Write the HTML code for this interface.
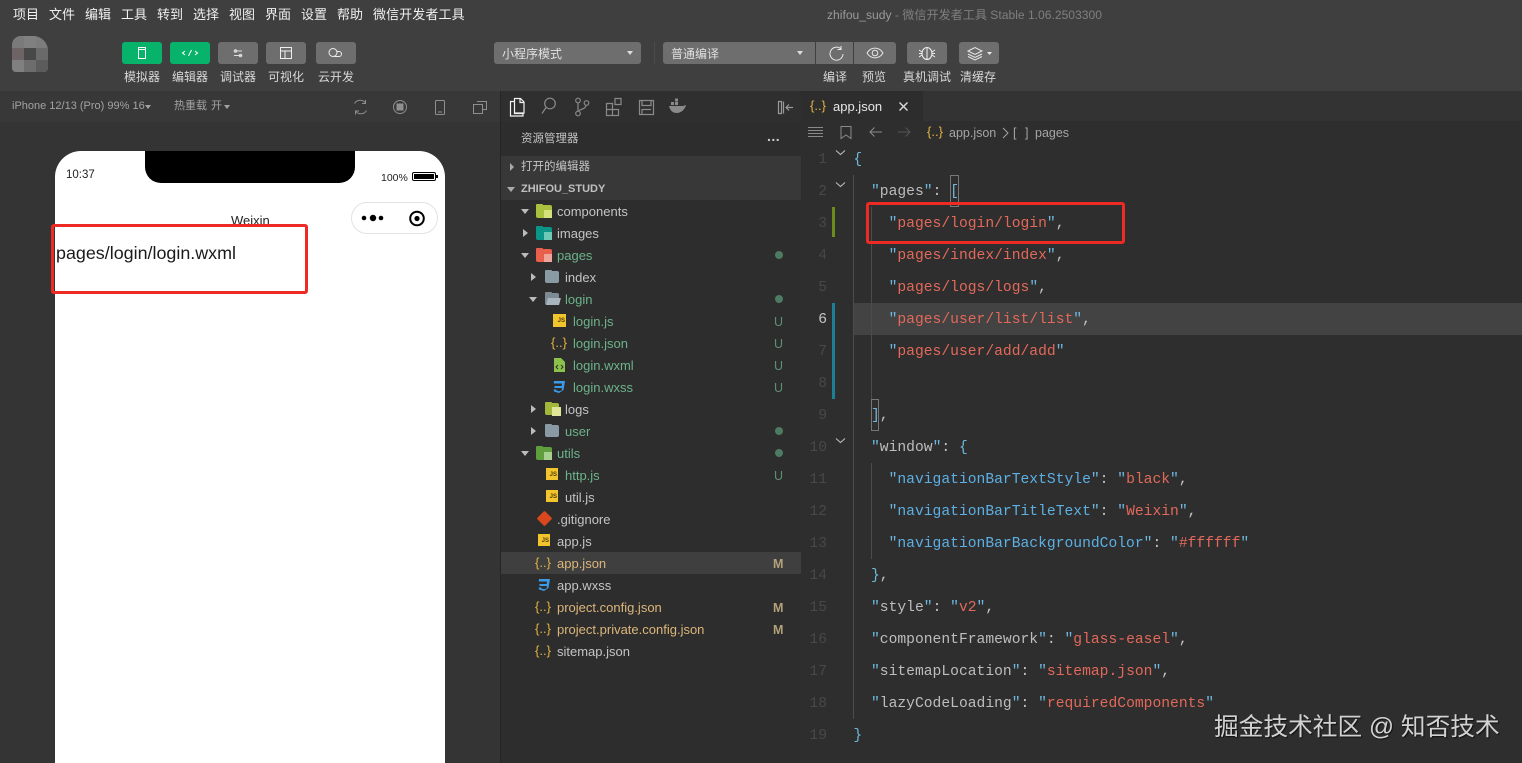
<!DOCTYPE html>
<html><head><meta charset="utf-8">
<style>
*{box-sizing:border-box}
html,body{margin:0;padding:0;width:1522px;height:763px;overflow:hidden;background:#2f2f2f}
body{position:relative;font-family:"Liberation Sans","Noto Sans CJK SC",sans-serif;color:#ccc}
.a{position:absolute;white-space:nowrap}
.m{font-size:13px;color:#f0f0f0;top:7px;line-height:16px}
.btn{position:absolute;top:42px;width:40px;height:22px;background:#6e6e6e;border-radius:3px}
.btn.g{background:#07b26a}
.btn svg,.dd svg{position:absolute;left:0;top:0}
.l{position:absolute;top:69px;font-size:12px;line-height:17px;color:#d8d8d8;white-space:nowrap;text-align:center}
.dd{position:absolute;top:42px;height:22px;background:#6e6e6e;border-radius:3px;font-size:12px;line-height:25px;color:#e0e0e0;padding-left:8px}
.r{position:absolute;left:0;width:300px;height:22px;line-height:22px;font-size:13px;white-space:nowrap}
.t{position:absolute;top:1px;color:#c4c4c4}
.gr{color:#6cb38a!important}
.or{color:#dcb67a!important}
.st{position:absolute;left:273px;top:1px;font-size:12.5px;font-weight:400}
.u{color:#5e8f75}
.mm{color:#b3a17a;font-weight:700;left:272px}
.dot{position:absolute;left:274px;top:7px;width:8px;height:8px;border-radius:50%;background:#4f7a62}
.ar{position:absolute;width:0;height:0}
.ar.d{border-left:4px solid transparent;border-right:4px solid transparent;border-top:5px solid #bbb;top:9px}
.ar.rt{border-top:4px solid transparent;border-bottom:4px solid transparent;border-left:5px solid #bbb;top:7px}
.js{position:absolute;top:4px;width:12px;height:12px;background:#f3c52c;color:#4b3d10;font-size:6px;line-height:15px;font-weight:700;text-align:right;padding-right:1px}
.jn{position:absolute;top:0;color:#e3b341;font-size:13px;font-family:"Liberation Sans",sans-serif}
.fd{position:absolute;top:5px;width:16px;height:13px;border-radius:1px 2px 2px 2px}
.fd:before{content:"";position:absolute;left:0;top:-1px;width:7px;height:3px;background:inherit;border-radius:1px}
.c{position:absolute;left:853.4px;font-family:"Liberation Mono","DejaVu Sans Mono",monospace;font-size:14.67px;line-height:34px;height:32px;white-space:pre;color:#bdbdbd}
.q{color:#6fb7dc}.s{color:#e2695a}.k{color:#5cb0e3}.p{color:#c4c4c4}
.n{position:absolute;left:800px;width:27px;height:32px;text-align:right;font-family:"Liberation Mono",monospace;font-size:14.67px;line-height:34px;color:#484848}
</style></head><body>

<!-- top chrome -->
<div class="a" style="left:0;top:0;width:1522px;height:91px;background:#3f3f3f"></div>
<div class="a m" style="left:13px">项目</div>
<div class="a m" style="left:49px">文件</div>
<div class="a m" style="left:85px">编辑</div>
<div class="a m" style="left:121px">工具</div>
<div class="a m" style="left:157px">转到</div>
<div class="a m" style="left:193px">选择</div>
<div class="a m" style="left:229px">视图</div>
<div class="a m" style="left:265px">界面</div>
<div class="a m" style="left:301px">设置</div>
<div class="a m" style="left:337px">帮助</div>
<div class="a m" style="left:373px;letter-spacing:.1px">微信开发者工具</div>
<div class="a" style="left:827px;top:7px;font-size:12.1px;line-height:16px;color:#9a9a9a">zhifou_sudy <span style="color:#7f7f7f">- 微信开发者工具 Stable 1.06.2503300</span></div>

<!-- avatar -->
<div class="a" style="left:12px;top:36px;width:36px;height:36px;border-radius:9px 15px 4px 4px;overflow:hidden;background:#777">
<div class="a" style="left:0;top:0;width:12px;height:12px;background:#7a7a7a"></div>
<div class="a" style="left:12px;top:0;width:12px;height:12px;background:#808080"></div>
<div class="a" style="left:24px;top:0;width:12px;height:12px;background:#7c7c7c"></div>
<div class="a" style="left:0;top:12px;width:12px;height:12px;background:#6e6465"></div>
<div class="a" style="left:12px;top:12px;width:12px;height:12px;background:#484848"></div>
<div class="a" style="left:24px;top:12px;width:12px;height:12px;background:#6a6a6a"></div>
<div class="a" style="left:0;top:24px;width:12px;height:12px;background:#808080"></div>
<div class="a" style="left:12px;top:24px;width:12px;height:12px;background:#6d6d6d"></div>
<div class="a" style="left:24px;top:24px;width:12px;height:12px;background:#5c5c5c"></div>
</div>

<!-- left buttons -->
<div class="btn g" style="left:122px"><svg width="40" height="22" fill="none" stroke="#fff" stroke-width="1"><rect x="16.5" y="5.5" width="7" height="11"/><path d="M17 7.5h6"/></svg></div>
<div class="btn g" style="left:170px"><svg width="40" height="22" fill="none" stroke="#fff" stroke-width="1"><path d="M15 9l-2.500 2 2.500 2M25 9l2.500 2-2.500 2M21.500 8l-3 6"/></svg></div>
<div class="btn" style="left:218px"><svg width="40" height="22" fill="none" stroke="#ddd" stroke-width="1"><path d="M16 9h8M16 13.500h8"/><circle cx="17.500" cy="9" r="1.300"/><circle cx="22.500" cy="13.500" r="1.300"/></svg></div>
<div class="btn" style="left:266px"><svg width="40" height="22" fill="none" stroke="#eee" stroke-width="1"><rect x="14.500" y="5.500" width="11" height="11"/><path d="M14.500 9h11M19 9v7.500"/></svg></div>
<div class="btn" style="left:316px"><svg width="40" height="22" fill="none" stroke="#eee" stroke-width="1"><circle cx="17" cy="10.500" r="4"/><path d="M18 14.500h5a2.500 2.500 0 0 0 0-5h-2"/></svg></div>
<div class="l" style="left:124px">模拟器</div>
<div class="l" style="left:172px">编辑器</div>
<div class="l" style="left:220px">调试器</div>
<div class="l" style="left:268px">可视化</div>
<div class="l" style="left:318px">云开发</div>

<!-- center -->
<div class="dd" style="left:494px;width:147px">小程序模式<div class="ar d" style="left:133px;top:9px;border-width:4px 3px 0;border-top-color:#ddd"></div></div>
<div class="a" style="left:654px;top:42px;width:1px;height:22px;background:#4b4b4b"></div>
<div class="dd" style="left:663px;padding-left:8px;border-radius:3px 0 0 3px;width:152px">普通编译<div class="ar d" style="left:134px;top:9px;border-width:4px 3px 0;border-top-color:#ddd"></div></div>
<div class="dd" style="left:816px;width:37px;padding:0;border-radius:0"><svg width="37" height="22" fill="none" stroke="#e8e8e8" stroke-width="1"><path d="M25 7a6.500 6.500 0 1 0 2 5"/><path d="M25 4v3.500h-3.500"/></svg></div>
<div class="dd" style="left:854px;width:42px;padding:0;border-radius:0 3px 3px 0"><svg width="42" height="22" fill="none" stroke="#e8e8e8" stroke-width="1"><path d="M13 11c4-6.500 12-6.500 16 0-4 6.500-12 6.500-16 0z"/><circle cx="21" cy="11" r="2.800"/></svg></div>
<div class="dd" style="left:907px;width:40px;padding:0"><svg width="40" height="22" fill="none" stroke="#f0f0f0" stroke-width="1"><ellipse cx="20" cy="11.500" rx="5" ry="6"/><path d="M20 5.500v12M12 8l3 2M12 15l3-2M28 8l-3 2M28 15l-3-2M12 11.500h3M28 11.500h-3"/></svg></div>
<div class="dd" style="left:959px;width:40px;padding:0"><svg width="40" height="22" fill="none" stroke="#e8e8e8" stroke-width="1"><path d="M9 9l7-3.500 7 3.500-7 3.500zM9 12l7 3.500 7-3.500M9 14.500l7 3.500 7-3.500"/><path d="M28 10h5l-2.500 3z" fill="#e8e8e8" stroke="none"/></svg></div>
<div class="l" style="left:823px">编译</div>
<div class="l" style="left:862px">预览</div>
<div class="l" style="left:903px">真机调试</div>
<div class="l" style="left:960px">清缓存</div>

<!-- sub toolbar left -->
<div class="a" style="left:0;top:91px;width:501px;height:31px;background:#383838"></div>
<div class="a" style="left:0;top:122px;width:501px;height:641px;background:#343434"></div>
<div class="a" style="left:12px;top:98px;font-size:11px;line-height:17px;color:#a3a3a3">iPhone 12/13 (Pro) 99% 16</div>
<div class="ar d" style="left:145px;top:105px;border-width:4px 3px 0;border-top-color:#a3a3a3"></div>
<div class="a" style="left:174px;top:98px;font-size:11px;line-height:17px;color:#a3a3a3;word-spacing:1px">热重载 开</div>
<div class="ar d" style="left:224px;top:105px;border-width:4px 3px 0;border-top-color:#a3a3a3"></div>
<svg class="a" style="left:350px;top:96px" width="140" height="22" fill="none" stroke="#8f8f8f" stroke-width="1"><path d="M4.500 7.500a6.500 6.500 0 0 1 11-.5M16.500 14.500a6.500 6.500 0 0 1-11 .5"/><path d="M15.500 4v3.500h-3.500M5.500 18.500v-3.500h3.500"/><circle cx="50" cy="11" r="6.500"/><rect x="47" y="8" width="6" height="6" fill="#8f8f8f"/><rect x="85.500" y="4.500" width="9" height="14" rx="1"/><path d="M88 16h4"/><rect x="123.500" y="8.500" width="9" height="9"/><path d="M127 5.500h9.500v8h-4"/></svg>

<!-- phone -->
<div class="a" style="left:55px;top:151px;width:390px;height:640px;background:#fff;border-radius:26px 26px 0 0"></div>
<div class="a" style="left:145px;top:151px;width:210px;height:32px;background:#000;border-radius:0 0 16px 16px"></div>
<div class="a" style="left:66px;top:168px;font-size:11.500px;line-height:14px;color:#222">10:37</div>
<div class="a" style="left:381px;top:171px;font-size:10.500px;line-height:14px;color:#222">100%</div>
<div class="a" style="left:412px;top:172px;width:24px;height:9px;border:1px solid #000;border-radius:2px;padding:1px"><div style="width:100%;height:100%;background:#000"></div></div>
<div class="a" style="left:436px;top:175px;width:1.500px;height:3px;background:#000"></div>
<div class="a" style="left:231px;top:213px;font-size:13px;line-height:16px;color:#222">Weixin</div>
<div class="a" style="left:351px;top:202px;width:87px;height:32px;border:1px solid #e2e2e2;border-radius:16px;background:#fff"></div>
<svg class="a" style="left:360px;top:208px" width="70" height="20"><circle cx="4" cy="10" r="2.300"/><circle cx="13" cy="10" r="3.200"/><circle cx="21" cy="10" r="2.300"/><circle cx="57" cy="10.500" r="6.800" fill="none" stroke="#000" stroke-width="2"/><circle cx="57" cy="10.500" r="2.600"/></svg>
<div class="a" style="left:56px;top:243px;font-size:17.900px;line-height:20px;color:#1a1a1a">pages/login/login.wxml</div>
<div class="a" style="left:51px;top:224px;width:257px;height:70px;border:3px solid #ee2a24;border-radius:3px"></div>

<!-- explorer -->
<div class="a" style="left:501px;top:91px;width:300px;height:672px;background:#2d2d2d"></div>
<div class="a" style="left:500px;top:91px;width:1px;height:672px;background:#252525"></div>
<div class="a" style="left:501px;top:91px;width:300px;height:31px;background:#2f2f2f"></div>
<svg class="a" style="left:501px;top:92px" width="300" height="30" fill="none" stroke="#8a8a8a" stroke-width="1.200"><path stroke="#f2f2f2" d="M9.500 9.500h4v12h8.500v2.500h-12.500zM13.500 6.500h6l3.500 3.500v11h-9.500zM19 6.500v4h4"/><circle cx="49" cy="11.500" r="5.300"/><path d="M45 15.500l-4 6"/><circle cx="77" cy="8.500" r="2.300"/><circle cx="77" cy="21.500" r="2.300"/><circle cx="85.500" cy="11" r="2.300"/><path d="M77 11v8M85 13.500c-.5 3-4 3.500-7 5"/><path d="M105.500 11.500h6v6h-6zM111.500 17.500h6v6h-6zM105.500 17.500h6v6h-6zM114 6.500h6v6h-6z"/><path d="M138.500 8.500h14v14h-14zM141 8.500v5h9v-5M141 22.500v-5h9"/><path fill="#8a8a8a" stroke="none" d="M168 14h14c1 0 2-1 3-1-.5 3-4 8-9 8-5 0-7-3-8-7zM170 10h3v3h-3zM174 10h3v3h-3zM174 6.500h3v3h-3z"/><path d="M277.500 9.500h3v12h-3zM282.500 9.500v12M292 15.500h-7M288 12.500l-3 3 3 3" stroke="#9a9a9a"/></svg>
<div class="a" style="left:521px;top:131px;font-size:11.500px;line-height:17px;color:#c4c4c4">资源管理器</div>
<div class="a" style="left:767px;top:128px;font-size:14px;line-height:16px;font-weight:700;color:#ccc;letter-spacing:.5px">...</div>

<div class="a" style="left:501px;top:156px;width:300px;height:44px;background:#383838"></div>
<div class="ar rt" style="left:510px;top:163px;border-width:4px 0 4px 4px;border-left-color:#aaa"></div>
<div class="a" style="left:521px;top:159px;font-size:11.500px;line-height:17px;font-weight:400;color:#c4c4c4">打开的编辑器</div>
<div class="ar d" style="left:507px;top:187px;border-top-color:#aaa"></div>
<div class="a" style="left:521px;top:181px;font-size:11px;line-height:17px;font-weight:700;color:#c0c0c0">ZHIFOU_STUDY</div>

<div class="a" style="left:501px;top:200px;width:300px;height:474px">
<div class="r" style="top:0"><div class="ar d" style="left:20px"></div><div class="fd" style="left:35px;background:#a9c13f"></div><div class="a" style="left:43px;top:10px;width:8px;height:8px;background:#d5e27c"></div><span class="t" style="left:56px">components</span></div>
<div class="r" style="top:22px"><div class="ar rt" style="left:22px"></div><div class="fd" style="left:35px;background:#0b9488"></div><div class="a" style="left:43px;top:10px;width:8px;height:8px;background:#6fc9b7"></div><span class="t" style="left:56px">images</span></div>
<div class="r" style="top:44px"><div class="ar d" style="left:20px"></div><div class="fd" style="left:35px;background:#e8604c"></div><div class="a" style="left:43px;top:10px;width:8px;height:8px;background:#f0a598"></div><span class="t gr" style="left:56px">pages</span><i class="dot"></i></div>
<div class="r" style="top:66px"><div class="ar rt" style="left:30px"></div><div class="fd" style="left:44px;width:14px;height:12px;background:#8a9aa5"></div><span class="t" style="left:64px">index</span></div>
<div class="r" style="top:88px"><div class="ar d" style="left:28px"></div><div class="fd" style="left:44px;width:14px;height:12px;background:#7d8b94"></div><div class="a" style="left:46px;top:10px;width:13px;height:7px;background:#a9b5bc;transform:skewX(-15deg)"></div><span class="t gr" style="left:64px">login</span><i class="dot"></i></div>
<div class="r" style="top:110px"><div class="js" style="left:52px;width:13px;height:13px">JS</div><span class="t gr" style="left:72px">login.js</span><span class="st u">U</span></div>
<div class="r" style="top:132px"><span class="jn" style="left:50px">{..}</span><span class="t gr" style="left:72px">login.json</span><span class="st u">U</span></div>
<div class="r" style="top:154px"><svg class="a" style="left:52px;top:4px" width="13" height="14"><path d="M1 0h7l4 4v10H1z" fill="#8bc34a"/><path d="M5 7L3 9l2 2M8 7l2 2-2 2" stroke="#2d2d2d" fill="none"/></svg><span class="t gr" style="left:72px">login.wxml</span><span class="st u">U</span></div>
<div class="r" style="top:176px"><svg class="a" style="left:51px;top:4px" width="14" height="14"><path d="M2 1h11l-1.500 9L7 13 2 11.500 1.700 9.500h2.500l.2 1 2.600.8 2.700-.8.300-2.500H2.500V6h7.200l.3-2.500H1.700z" fill="#3c9be8"/></svg><span class="t gr" style="left:72px">login.wxss</span><span class="st u">U</span></div>
<div class="r" style="top:198px"><div class="ar rt" style="left:30px"></div><div class="fd" style="left:44px;width:14px;height:12px;background:#a3b83a"></div><div class="a" style="left:51px;top:9px;width:9px;height:9px;background:#dfe69a"></div><span class="t" style="left:64px">logs</span></div>
<div class="r" style="top:220px"><div class="ar rt" style="left:30px"></div><div class="fd" style="left:44px;width:14px;height:12px;background:#8a9aa5"></div><span class="t gr" style="left:64px">user</span><i class="dot"></i></div>
<div class="r" style="top:242px"><div class="ar d" style="left:20px"></div><div class="fd" style="left:35px;background:#5f9e3c"></div><div class="a" style="left:43px;top:10px;width:8px;height:8px;background:#a9d08e"></div><span class="t gr" style="left:56px">utils</span><i class="dot"></i></div>
<div class="r" style="top:264px"><div class="js" style="left:45px">JS</div><span class="t gr" style="left:64px">http.js</span><span class="st u">U</span></div>
<div class="r" style="top:286px"><div class="js" style="left:45px">JS</div><span class="t" style="left:64px">util.js</span></div>
<div class="r" style="top:308px"><div class="a" style="left:38px;top:5px;width:11px;height:11px;background:#d9481c;transform:rotate(45deg);border-radius:1px"></div><span class="t" style="left:56px">.gitignore</span></div>
<div class="r" style="top:330px"><div class="js" style="left:37px">JS</div><span class="t" style="left:56px">app.js</span></div>
<div class="r" style="top:352px;background:#3f3f3f"><span class="jn" style="left:34px">{..}</span><span class="t or" style="left:56px">app.json</span><span class="st mm">M</span></div>
<div class="r" style="top:374px"><svg class="a" style="left:36px;top:4px" width="14" height="14"><path d="M2 1h11l-1.500 9L7 13 2 11.500 1.700 9.500h2.500l.2 1 2.600.8 2.700-.8.300-2.500H2.500V6h7.200l.3-2.500H1.700z" fill="#3c9be8"/></svg><span class="t" style="left:56px">app.wxss</span></div>
<div class="r" style="top:396px"><span class="jn" style="left:34px">{..}</span><span class="t or" style="left:56px">project.config.json</span><span class="st mm">M</span></div>
<div class="r" style="top:418px"><span class="jn" style="left:34px">{..}</span><span class="t or" style="left:56px">project.private.config.json</span><span class="st mm">M</span></div>
<div class="r" style="top:440px"><span class="jn" style="left:34px">{..}</span><span class="t" style="left:56px">sitemap.json</span></div>
</div>

<!-- editor -->
<div class="a" style="left:801px;top:91px;width:721px;height:672px;background:#2e2e2e"></div>
<div class="a" style="left:801px;top:91px;width:721px;height:30px;background:#333"></div>
<div class="a" style="left:801px;top:91px;width:122px;height:30px;background:#2d2d2d"></div>
<span class="a" style="left:810px;top:97px;font:400 13px/17px 'Liberation Sans',sans-serif;color:#e3b341">{..}</span>
<div class="a" style="left:833px;top:98px;font-size:13px;line-height:17px;color:#e6e6e6">app.json</div>
<svg class="a" style="left:897px;top:100px" width="14" height="14" stroke="#ddd" stroke-width="1.400"><path d="M2.500 2.500l8 8M10.500 2.500l-8 8"/></svg>
<svg class="a" style="left:806px;top:124px" width="110" height="16" fill="none" stroke="#8a8a8a" stroke-width="1"><path d="M2 3.500h15M2 6.500h15M2 9.500h15M2 12.500h15"/><path d="M35 2.500h10v12l-5-3.500-5 3.500z"/><path d="M76 8H64M68.500 3.500L64 8l4.500 4.500"/><path stroke="#555" d="M92 8h12M99.500 3.500L104 8l-4.500 4.500"/></svg>
<span class="a" style="left:927px;top:123px;font:400 13px/17px 'Liberation Sans',sans-serif;color:#e3b341">{..}</span>
<div class="a" style="left:949px;top:125px;font-size:12.500px;line-height:17px;color:#a5a5a5">app.json</div>
<svg class="a" style="left:1001px;top:126px" width="10" height="14" fill="none" stroke="#a5a5a5"><path d="M2 2l5 5-5 5"/></svg>
<div class="a" style="left:1013px;top:125px;font-size:12.500px;line-height:17px;color:#a5a5a5;word-spacing:5px">[ ]</div>
<div class="a" style="left:1035px;top:125px;font-size:12.500px;line-height:17px;color:#a5a5a5">pages</div>

<!-- line highlight -->
<div class="a" style="left:853px;top:303px;width:669px;height:32px;background:#434343"></div>
<!-- gutter markers -->
<div class="a" style="left:832px;top:207px;width:3px;height:30px;background:#6d8a1c"></div>
<div class="a" style="left:832px;top:303px;width:3px;height:96px;background:#1d7f97"></div>
<!-- indent guides -->
<div class="a" style="left:853px;top:175px;width:1px;height:544px;background:#4c4c4c"></div>
<div class="a" style="left:871px;top:207px;width:1px;height:192px;background:#4c4c4c"></div>
<div class="a" style="left:871px;top:463px;width:1px;height:96px;background:#4c4c4c"></div>
<!-- fold arrows -->
<svg class="a" style="left:834px;top:148px" width="14" height="300" fill="none" stroke="#bbb" stroke-width="1.100"><path d="M2 2.500l4.500 4 4.500-4M2 34.500l4.500 4 4.500-4M2 290.500l4.500 4 4.500-4"/></svg>

<div class="n" style="top:143px">1</div><div class="n" style="top:175px">2</div><div class="n" style="top:207px">3</div><div class="n" style="top:239px">4</div><div class="n" style="top:271px">5</div><div class="n" style="top:303px;color:#c6c6c6">6</div><div class="n" style="top:335px">7</div><div class="n" style="top:367px">8</div><div class="n" style="top:399px">9</div><div class="n" style="top:431px">10</div><div class="n" style="top:463px">11</div><div class="n" style="top:495px">12</div><div class="n" style="top:527px">13</div><div class="n" style="top:559px">14</div><div class="n" style="top:591px">15</div><div class="n" style="top:623px">16</div><div class="n" style="top:655px">17</div><div class="n" style="top:687px">18</div><div class="n" style="top:719px">19</div>

<div class="c q" style="top:143px">{</div>
<div class="c" style="top:175px">  <span class="q">"</span>pages<span class="q">"</span><span class="p">:</span> <span class="q">[</span></div>
<div class="c" style="top:207px">    <span class="q">"</span><span class="s">pages/login/login</span><span class="q">"</span><span class="p">,</span></div>
<div class="c" style="top:239px">    <span class="q">"</span><span class="s">pages/index/index</span><span class="q">"</span><span class="p">,</span></div>
<div class="c" style="top:271px">    <span class="q">"</span><span class="s">pages/logs/logs</span><span class="q">"</span><span class="p">,</span></div>
<div class="c" style="top:303px">    <span class="q">"</span><span class="s">pages/user/list/list</span><span class="q">"</span><span class="p">,</span></div>
<div class="c" style="top:335px">    <span class="q">"</span><span class="s">pages/user/add/add</span><span class="q">"</span></div>
<div class="c" style="top:399px">  <span class="q">]</span><span class="p">,</span></div>
<div class="c" style="top:431px">  <span class="q">"</span>window<span class="q">"</span><span class="p">:</span> <span class="q">{</span></div>
<div class="c" style="top:463px">    <span class="q">"</span><span class="k">navigationBarTextStyle</span><span class="q">"</span><span class="p">:</span> <span class="q">"</span><span class="s">black</span><span class="q">"</span><span class="p">,</span></div>
<div class="c" style="top:495px">    <span class="q">"</span><span class="k">navigationBarTitleText</span><span class="q">"</span><span class="p">:</span> <span class="q">"</span><span class="s">Weixin</span><span class="q">"</span><span class="p">,</span></div>
<div class="c" style="top:527px">    <span class="q">"</span><span class="k">navigationBarBackgroundColor</span><span class="q">"</span><span class="p">:</span> <span class="q">"</span><span class="s">#ffffff</span><span class="q">"</span></div>
<div class="c" style="top:559px">  <span class="q">}</span><span class="p">,</span></div>
<div class="c" style="top:591px">  <span class="q">"</span>style<span class="q">"</span><span class="p">:</span> <span class="q">"</span><span class="s">v2</span><span class="q">"</span><span class="p">,</span></div>
<div class="c" style="top:623px">  <span class="q">"</span>componentFramework<span class="q">"</span><span class="p">:</span> <span class="q">"</span><span class="s">glass-easel</span><span class="q">"</span><span class="p">,</span></div>
<div class="c" style="top:655px">  <span class="q">"</span>sitemapLocation<span class="q">"</span><span class="p">:</span> <span class="q">"</span><span class="s">sitemap.json</span><span class="q">"</span><span class="p">,</span></div>
<div class="c" style="top:687px">  <span class="q">"</span>lazyCodeLoading<span class="q">"</span><span class="p">:</span> <span class="q">"</span><span class="s">requiredComponents</span><span class="q">"</span></div>
<div class="c q" style="top:719px">}</div>

<!-- bracket highlight boxes -->
<div class="a" style="left:950px;top:175px;width:9px;height:32px;border:1px solid #777"></div>
<div class="a" style="left:871px;top:399px;width:8px;height:32px;border:1px solid #777"></div>

<!-- red box -->
<div class="a" style="left:866px;top:202px;width:259px;height:42px;border:3px solid #ee2a24;border-radius:3px"></div>

<!-- watermark -->
<div class="a" style="left:1214px;top:711px;font-size:24.700px;line-height:34px;color:#d2d2d2;text-shadow:1px 1px 1px #111">掘金技术社区 @ 知否技术</div>
</body></html>
